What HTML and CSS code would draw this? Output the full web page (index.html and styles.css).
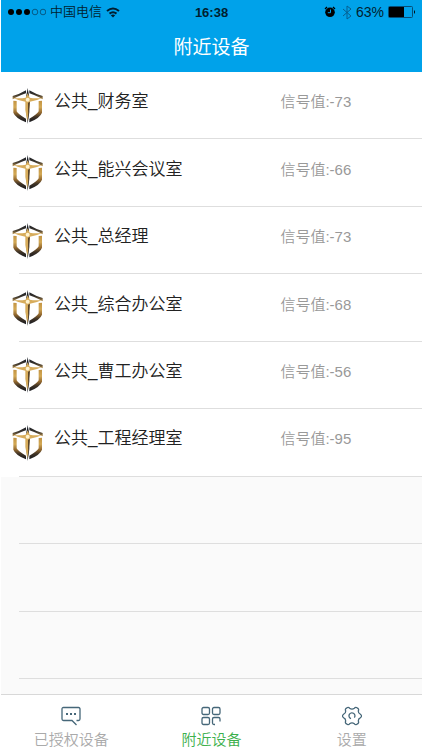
FILE: index.html
```html
<!DOCTYPE html>
<html lang="zh-CN">
<head>
    <meta charset="UTF-8">
    <meta name="viewport" content="width=device-width, initial-scale=1.0">
    <title>附近设备</title>
    <link rel="stylesheet" href="styles.css">
</head>
<body>
    <!-- Shared device logo -->
    <svg class="defs" width="0" height="0" aria-hidden="true">
        <defs>
            <linearGradient id="gold" x1="0" y1="0" x2="0" y2="1">
                <stop offset="0" stop-color="#c39443"/>
                <stop offset="0.3" stop-color="#d3a955"/>
                <stop offset="0.55" stop-color="#94692f"/>
                <stop offset="0.75" stop-color="#3f3326"/>
                <stop offset="1" stop-color="#17191f"/>
            </linearGradient>
            <linearGradient id="dark" x1="0" y1="1" x2="0" y2="0">
                <stop offset="0" stop-color="#b28a48"/>
                <stop offset="0.5" stop-color="#3a342c"/>
                <stop offset="1" stop-color="#1d2027"/>
            </linearGradient>
            <symbol id="shield" viewBox="0 0 96 108">
                <path fill="url(#dark)" d="M2 24Q24 18 42 7V16Q24 22 13 28L2 34ZM92 24Q70 18 52 7V16Q70 22 81 28L92 34Z"/>
                <path fill="url(#gold)" d="M4 38L14 39V70Q18 79 42 92V103Q10 90 4 74ZM90 38L80 39V70Q76 79 52 92V103Q84 90 90 74Z"/>
                <path fill="#1d2027" d="M47 0L51 22L52 72L47 108L43 72L43 22Z"/>
                <path fill="#d7ac5b" d="M47 16L53 29Q72 32 92 29Q76 37 54 41L51 66L46 100L40 66L40 41Q18 37 2 29Q22 32 41 29Z"/>
                <path fill="#5b4529" d="M48 44L54 42L51 68L48 94Z"/>
                <circle cx="47" cy="35" r="6" fill="#fff3cf"/>
            </symbol>
        </defs>
    </svg>

    <header class="header">
        <div class="status-bar">
            <div class="carrier">
                <svg width="39" height="8" viewBox="0 0 39 8" aria-hidden="true">
                    <circle cx="4" cy="4" r="3"/>
                    <circle cx="12" cy="4" r="3"/>
                    <circle cx="20" cy="4" r="3"/>
                    <g fill="none" stroke="#073c5c" stroke-width="0.7">
                        <circle cx="28" cy="4" r="2.8"/>
                        <circle cx="36" cy="4" r="2.8"/>
                    </g>
                </svg>
                <span class="carrier-name">中国电信</span>
                <svg width="14" height="11" viewBox="0 0 14 11" fill="none" stroke="#001e30" stroke-width="2" aria-hidden="true">
                    <path d="M1 4Q7-1 13 4M3.5 6.6Q7 3.8 10.5 6.6"/>
                    <path fill="#001e30" stroke="none" d="M4.8 8.3Q7 6.8 9.2 8.3L7 10.6Z"/>
                </svg>
            </div>
            <time class="clock">16:38</time>
            <div class="battery">
                <svg class="alarm" width="12" height="12" viewBox="0 0 12 12" aria-hidden="true">
                    <circle cx="6" cy="6.3" r="4.8"/>
                    <path fill="none" stroke="#000" stroke-width="1.3" d="M1 3L3 1M9 1L11 3"/>
                    <path fill="none" stroke="#00a2ea" d="M6.5 3.5V6.7H3.8"/>
                </svg>
                <svg width="10" height="15" viewBox="0 0 10 15" fill="none" stroke="#075f90" aria-hidden="true">
                    <path d="M1 4L9 11L5 14V1L9 4L1 11"/>
                </svg>
                <span class="percent">63%</span>
                <svg width="28" height="12" viewBox="0 0 28 12" aria-hidden="true">
                    <rect x="0.5" y="0.5" width="24" height="11" rx="1" fill="none" stroke="#064d76"/>
                    <path d="M1 1H16V11H1ZM26 4Q28 6 26 8Z"/>
                </svg>
            </div>
        </div>
        <h1 class="title">附近设备</h1>
    </header>

    <main class="main">
        <ul class="device-list">
            <li class="device">
                <svg class="logo" aria-hidden="true"><use href="#shield"/></svg>
                <div class="device-info"><span class="name">公共_财务室</span><span class="signal">信号值:-73</span></div>
            </li>
            <li class="device">
                <svg class="logo" aria-hidden="true"><use href="#shield"/></svg>
                <div class="device-info"><span class="name">公共_能兴会议室</span><span class="signal">信号值:-66</span></div>
            </li>
            <li class="device">
                <svg class="logo" aria-hidden="true"><use href="#shield"/></svg>
                <div class="device-info"><span class="name">公共_总经理</span><span class="signal">信号值:-73</span></div>
            </li>
            <li class="device">
                <svg class="logo" aria-hidden="true"><use href="#shield"/></svg>
                <div class="device-info"><span class="name">公共_综合办公室</span><span class="signal">信号值:-68</span></div>
            </li>
            <li class="device">
                <svg class="logo" aria-hidden="true"><use href="#shield"/></svg>
                <div class="device-info"><span class="name">公共_曹工办公室</span><span class="signal">信号值:-56</span></div>
            </li>
            <li class="device">
                <svg class="logo" aria-hidden="true"><use href="#shield"/></svg>
                <div class="device-info"><span class="name">公共_工程经理室</span><span class="signal">信号值:-95</span></div>
            </li>
            <!-- Empty rows -->
            <li class="device empty"></li>
            <li class="device empty"></li>
            <li class="device empty"></li>
        </ul>
    </main>

    <nav class="tab-bar">
        <a class="tab" href="#authorized">
            <svg width="20" height="20" viewBox="0 0 20 20" fill="none" stroke="#466779" stroke-width="1.3" aria-hidden="true">
                <path d="M15.5 14.5H17.5Q19 14.5 19 13V3Q19 1.5 17.5 1.5H2.5Q1 1.5 1 3V13Q1 14.5 2.5 14.5H11L15.5 19"/>
                <path stroke-width="2" d="M5 8H7M9 8H11M13 8H15"/>
            </svg>
            <span>已授权设备</span>
        </a>
        <a class="tab active" href="#nearby" aria-current="page">
            <svg width="20" height="20" viewBox="0 0 20 20" fill="none" stroke="#466779" stroke-width="1.3" aria-hidden="true">
                <rect x="1" y="1.5" width="7.5" height="7" rx="1.5"/>
                <rect x="11.5" y="1.5" width="7.5" height="7" rx="1.5"/>
                <rect x="1" y="11.5" width="7.5" height="7" rx="1.5"/>
                <path d="M14 18.5H13Q11.5 18.5 11.5 17V13Q11.5 11.5 13 11.5H17.5Q19 11.5 19 13V15.5"/>
            </svg>
            <span>附近设备</span>
        </a>
        <a class="tab" href="#settings">
            <svg width="20" height="20" viewBox="0 0 20 20" fill="none" stroke="#466779" stroke-width="1.3" aria-hidden="true">
                <path d="M5.5 1.5Q6.7 1 7.6 2.2Q10 4 12.4 2.2Q13.3 1 14.5 1.5L16.2 2.6Q17 3.5 16.3 5Q16.3 7.6 18.3 8.2Q19.5 9 19.5 10Q19.5 11 18.3 11.8Q16.3 12.4 16.3 15Q17 16.5 16.2 17.4L14.5 18.5Q13.3 19 12.4 17.8Q10 16 7.6 17.8Q6.7 19 5.5 18.5L3.8 17.4Q3 16.5 3.7 15Q3.7 12.4 1.7 11.8Q0.5 11 0.5 10Q0.5 9 1.7 8.2Q3.7 7.6 3.7 5Q3 3.5 3.8 2.6Z"/>
                <path d="M9 12.7A3 3 0 1 1 12.4 11.6"/>
            </svg>
            <span>设置</span>
        </a>
    </nav>
</body>
</html>
```
FILE: styles.css
```css
* {
    box-sizing: border-box;
}

body {
    margin: 0;
    padding-left: 1px;
    min-height: 100vh;
    display: flex;
    flex-direction: column;
    background-color: #fff;
    font-family: "Liberation Sans", "Noto Sans CJK SC", sans-serif;
}

.defs {
    position: absolute;
}

/* Header */
.header {
    height: 72px;
    background-color: #00a2ea;
}

.status-bar {
    display: grid;
    grid-template-columns: 1fr auto 1fr;
    align-items: center;
    height: 24px;
    padding: 0 6px;
    font-size: 13px;
    color: #001e30;
}

.carrier,
.battery {
    display: flex;
    align-items: center;
    gap: 4px;
}

.carrier-name {
    font-weight: 350;
    line-height: 18px;
}

.battery {
    justify-content: flex-end;
}

.alarm {
    margin-right: 2px;
}

.clock {
    font-weight: bold;
}

.percent {
    font-size: 14px;
}

.title {
    margin: 0;
    font-size: 19px;
    font-weight: normal;
    line-height: 48px;
    text-align: center;
    color: #fff;
}

/* Device list */
.main {
    flex: 1;
    display: flex;
    padding-bottom: 15px;
    background-color: #fafafa;
}

.device-list {
    flex: 1;
    display: flex;
    flex-direction: column;
    margin: 0;
    padding: 0;
    list-style: none;
}

.device {
    flex: 1;
    display: flex;
    align-items: center;
    min-height: 67px;
    padding-left: 11px;
    background: linear-gradient(#dedede, #dedede) 18px 100% / 100% 1px no-repeat #fff;
}

.empty {
    background-color: #fafafa;
}

.logo {
    width: 32px;
    height: 36px;
    margin-right: 10px;
}

.device-info {
    flex: 1;
    display: grid;
    grid-template-columns: 8fr 5fr;
    align-items: center;
    padding-bottom: 7px;
}

.name {
    font-size: 17px;
    font-weight: 350;
    line-height: 24px;
    color: #222;
}

.signal {
    font-size: 15px;
    font-weight: 350;
    line-height: 24px;
    color: #999;
}

/* Bottom tabs */
.tab-bar {
    display: flex;
    height: 56px;
    border-top: 1px solid #d8d8d8;
    background-color: #fff;
}

.tab {
    flex: 1;
    display: flex;
    flex-direction: column;
    align-items: center;
    gap: 4px;
    padding-top: 11px;
    font-size: 15px;
    font-weight: 350;
    line-height: 20px;
    color: #aaa;
    text-decoration: none;
}

.active {
    color: #3cb04c;
}
```
